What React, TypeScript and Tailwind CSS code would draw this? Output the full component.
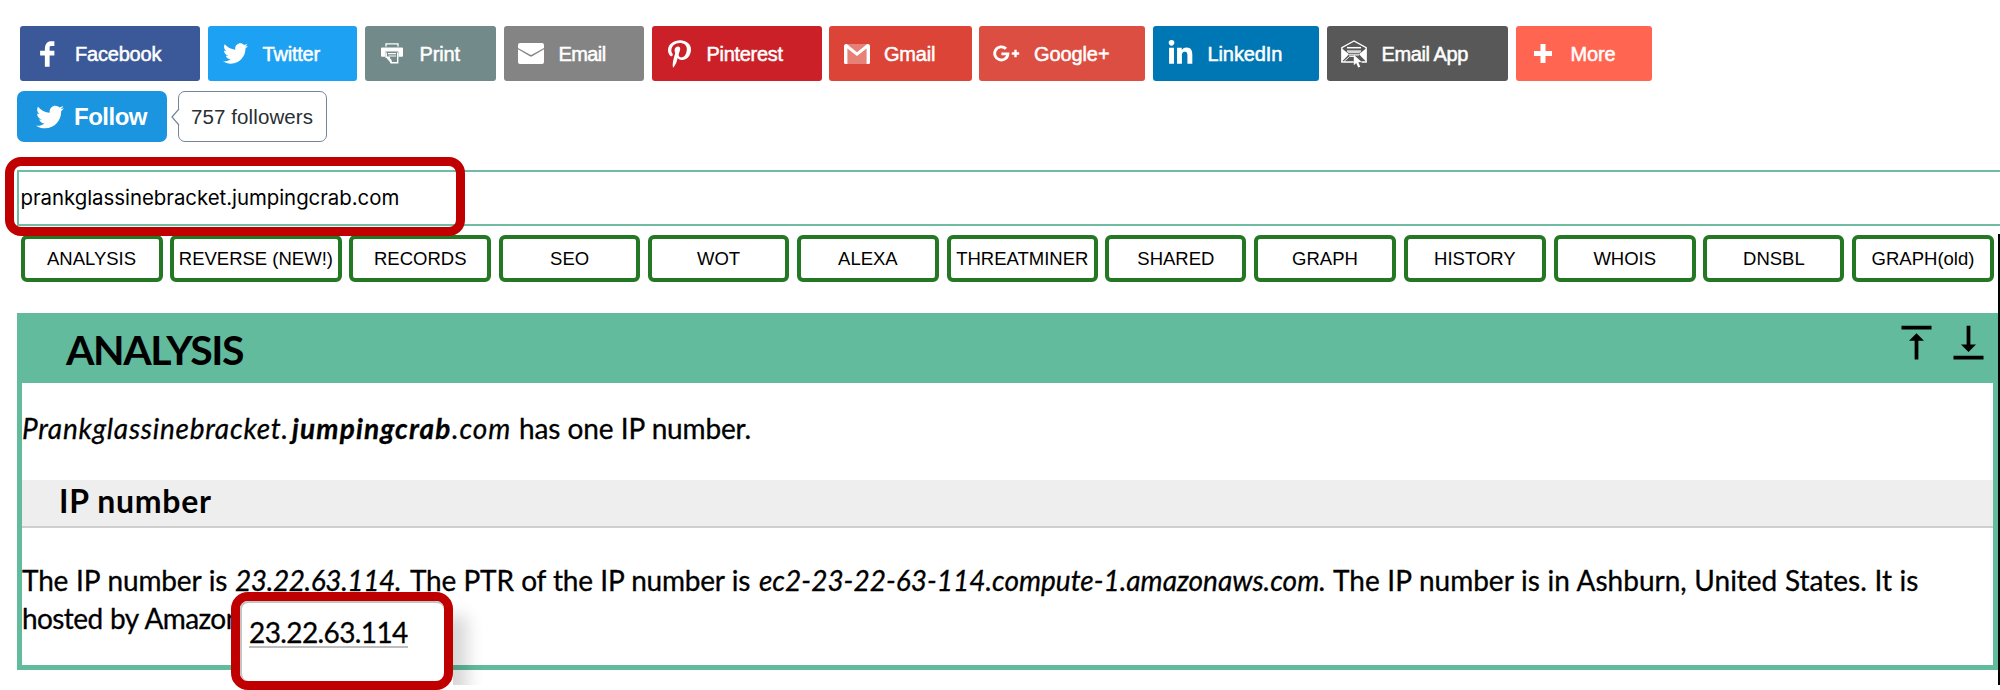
import type { ReactNode } from 'react';
import { FaTwitter, FaPinterestP, FaLinkedinIn } from 'react-icons/fa';
import { MdVerticalAlignTop, MdVerticalAlignBottom } from 'react-icons/md';

const FacebookIcon = () => (
  <svg width="38" height="38" viewBox="0 0 40 40" fill="#fff">
    <path d="M21.700 16.700h5v5h-5v11.600h-5V21.700h-5v-5h5v-2.100c0-2 .6-4.500 1.800-5.900 1.300-1.300 2.800-2 4.700-2h3.500v5h-3.500c-.9 0-1.500.6-1.500 1.500z" />
  </svg>
);

const PrintIcon = () => (
  <svg width="22" height="21" viewBox="0 0 22 21" fill="none" stroke="#fff">
    <path d="M5 3.500V.8h12v2.700" strokeWidth="1.300" />
    <path d="M1.200 4.500h19.600A1.200 1.200 0 0 1 22 5.700V13a.8.8 0 0 1-.8.8h-3.700V8.600h-13v5.200H.8A.8.8 0 0 1 0 13V5.700a1.200 1.200 0 0 1 1.200-1.200z" fill="#fff" stroke="none" />
    <path d="M5.200 9.500v4.700h2.400c1.300 0 1 1.800 1 2.300 1.600 0 1.600 1.400 1.600 3.300h6.500V9.500" strokeWidth="1.400" />
    <path d="M7 10.600h8M7.500 13h7.500" strokeWidth="1.100" />
    <path d="M4.600 14l5.600 6.500v-3.700H8.600V14z" fill="#fff" stroke="none" />
  </svg>
);

const EmailIcon = () => (
  <svg width="26" height="21" viewBox="0 0 26 21" fill="#fff">
    <path d="M2 0h22a2 2 0 0 1 2 2v2.900L14.200 11.600a2.300 2.300 0 0 1-2.400 0L0 4.900V2a2 2 0 0 1 2-2z" />
    <path d="M0 6.200l11.400 6.800a3 3 0 0 0 3.200 0L26 6.200V19a2 2 0 0 1-2 2H2a2 2 0 0 1-2-2z" />
  </svg>
);

const GmailIcon = () => (
  <svg width="26" height="20" viewBox="0 0 26 20">
    <path d="M2 0h22v20H2z" fill="#fff" fillOpacity=".32" />
    <path d="M0 2C0 .7 1 0 2 0h.8L13 8.200 23.200 0H24c1 0 2 .7 2 2v16.500a1.500 1.500 0 0 1-1.500 1.500H22.600V4.600L13 12 3.400 4.600V20H1.500A1.500 1.500 0 0 1 0 18.500z" fill="#fff" />
  </svg>
);

const GooglePlusIcon = () => (
  <svg width="27" height="17" viewBox="0 0 27 17" fill="none" stroke="#fff">
    <path d="M13 3.800A6.600 6.600 0 1 0 14.900 8.900H8.400" strokeWidth="2.900" />
    <path d="M22.500 4.800v7.400M18.800 8.500h7.400" strokeWidth="2.400" />
  </svg>
);

const EmailAppIcon = () => (
  <svg width="26" height="28" viewBox="0 0 26 28" fill="none" stroke="#fff">
    <path d="M.8 22V7.700L13 1l12.200 6.700V22" strokeWidth="1.300" />
    <path d="M.2 22h12.600M20.500 22h5.300" strokeWidth="1.500" />
    <path d="M6 7.700h14" strokeWidth="1.500" />
    <path d="M6 10.200h14v1.700l-2 1.300H8l-2-1.300z" fill="#fff" fillOpacity=".75" stroke="none" />
    <path d="M1 8.500l7 5.800L1 21.500zM25 8.500l-7 5.800 7 7.200z" fill="#fff" stroke="none" />
    <path d="M8 14.900h10" strokeWidth="1.200" />
    <path d="M3 21.500l5.500-5h5" strokeWidth=".9" />
    <path d="M12.800 14.800v10.400l2.400-2.200 2 4.600 2.100-.9-2-4.500 3.400-.1z" fill="#fff" stroke="none" />
  </svg>
);

const PlusIcon = () => (
  <svg width="18" height="19" viewBox="0 0 18 19" fill="#fff">
    <path d="M6.500 0h5v6.900H18v5.200h-6.500V19h-5v-6.900H0V6.900h6.500z" />
  </svg>
);

const shares: { label: string; look: string; icon: ReactNode }[] = [
  { label: 'Facebook', look: 'w-[180px] bg-[#3b5998] tracking-[-0.2px]', icon: <FacebookIcon /> },
  { label: 'Twitter', look: 'w-[149.5px] bg-[#1da1f2] tracking-[-0.2px]', icon: <FaTwitter size={25} /> },
  { label: 'Print', look: 'w-[131.5px] bg-[#728a8a] tracking-[-0.15px]', icon: <PrintIcon /> },
  { label: 'Email', look: 'w-[140.5px] bg-[#848484] tracking-[-0.6px]', icon: <EmailIcon /> },
  { label: 'Pinterest', look: 'w-[170px] bg-[#cb2027] tracking-[-0.3px]', icon: <FaPinterestP className="h-[28px] w-[23px]" preserveAspectRatio="none" /> },
  { label: 'Gmail', look: 'w-[142.5px] bg-[#dc4437] tracking-[-0.2px]', icon: <GmailIcon /> },
  { label: 'Google+', look: 'w-[166px] bg-[#dc4e41] tracking-[-0.1px]', icon: <GooglePlusIcon /> },
  { label: 'LinkedIn', look: 'w-[166.5px] bg-[#0077b5] tracking-[-0.1px]', icon: <FaLinkedinIn size={27} /> },
  { label: 'Email App', look: 'w-[181.5px] bg-[#585858] tracking-[-0.4px]', icon: <EmailAppIcon /> },
  { label: 'More', look: 'w-[136.5px] bg-[#ff6550] tracking-[-0.15px]', icon: <PlusIcon /> },
];

const tabs: { label: string; width: string }[] = [
  { label: 'ANALYSIS', width: 'w-[142px]' },
  { label: 'REVERSE (NEW!)', width: 'w-[171.5px]' },
  { label: 'RECORDS', width: 'w-[142px]' },
  { label: 'SEO', width: 'w-[141.5px]' },
  { label: 'WOT', width: 'w-[141px]' },
  { label: 'ALEXA', width: 'w-[142.5px]' },
  { label: 'THREATMINER', width: 'w-[151px]' },
  { label: 'SHARED', width: 'w-[141px]' },
  { label: 'GRAPH', width: 'w-[142px]' },
  { label: 'HISTORY', width: 'w-[142.5px]' },
  { label: 'WHOIS', width: 'w-[142px]' },
  { label: 'DNSBL', width: 'w-[141px]' },
  { label: 'GRAPH(old)', width: 'w-[142px]' },
];

export default function App() {
  return (
    <div className="relative h-[690px] w-[2000px] overflow-hidden bg-white pt-[26px] font-['Liberation_Sans',Arial,sans-serif] text-black">
      <div className="flex h-[55px] gap-[7.5px] pl-[20px]">
        {shares.map((s) => (
          <button key={s.label} className={`flex shrink-0 items-center rounded-[3px] text-[20px] text-white [-webkit-text-stroke:0.5px_white] ${s.look}`}>
            <span className="flex w-[55px] justify-center [-webkit-text-stroke:0]">{s.icon}</span>
            <span className="pt-px whitespace-nowrap">{s.label}</span>
          </button>
        ))}
      </div>

      <div className="mt-[10px] flex h-[51px] pl-[17px]">
        <button className="flex w-[150px] items-center rounded-[7px] bg-[#1b95e0] pl-[19px] text-[24px] font-bold tracking-[-0.5px] text-white">
          <FaTwitter size={28} />
          <span className="ml-[10px] pt-px">Follow</span>
        </button>
        <div className="relative ml-[11px] flex w-[149px] items-center rounded-[7px] border border-[#74879a] pl-[12px] text-[20.5px] tracking-[0.1px] text-[#292f33]">
          <svg className="absolute top-[16px] left-[-8px]" width="9" height="18" viewBox="0 0 9 18">
            <path d="M9 .5L1 9l8 8.500z" fill="#fff" />
            <path d="M8 .8L1 9l7 8.200" fill="none" stroke="#74879a" strokeWidth="1.300" />
          </svg>
          <span className="pt-px whitespace-nowrap">757 followers</span>
        </div>
      </div>

      <div className="mt-[28px] ml-[17px] flex h-[56px] w-[1990px] items-center border-2 border-[#71bda3] pt-px pl-[1.5px] font-['Inter',sans-serif] text-[20.4px] tracking-[-0.03px]">
        prankglassinebracket.jumpingcrab.com
      </div>

      <div className="mt-[9px] flex h-[47px] gap-[7.625px] pl-[20.5px]">
        {tabs.map((t) => (
          <button key={t.label} className={`flex shrink-0 items-center justify-center rounded-[6px] border-4 border-[#247824] text-[18.5px] whitespace-nowrap ${t.width}`}>
            {t.label}
          </button>
        ))}
      </div>

      <section className="mt-[31px] ml-[17px] h-[357px] w-[1981px] border-5 border-t-0 border-[#62bb9c] font-['Lato',sans-serif] text-[28px]">
        <header className="flex h-[70px] justify-between bg-[#62bb9c] pr-[2px] pl-[44px]">
          <h1 className="pt-px text-[41px] leading-[71px] font-bold tracking-[-1.45px]">ANALYSIS</h1>
          <div className="flex gap-[7px] pt-[7px]">
            <MdVerticalAlignTop size={45} />
            <MdVerticalAlignBottom size={45} />
          </div>
        </header>
        <p className="mt-[26px] flex leading-[38px] whitespace-pre [-webkit-text-stroke:0.3px_black]">
          <i className="w-[270px] tracking-[0.75px]">Prankglassinebracket.</i>
          <b className="w-[160px] tracking-[1.15px] italic">jumpingcrab</b>
          <i className="w-[67px] tracking-[0.9px]">.com</i>
          <span className="tracking-[-0.17px] [word-spacing:0.4px]">has one IP number.</span>
        </p>
        <h2 className="mt-[33px] h-[48px] border-b-2 border-[#cfcfcf] bg-[#eee] pl-[37px] text-[32px] leading-[41px] font-bold tracking-[0.7px]">IP number</h2>
        <div className="mt-[33px] leading-[38px] whitespace-pre [-webkit-text-stroke:0.3px_black]">
          <p className="flex">
            <span className="w-[213px] tracking-[-0.17px] [word-spacing:0.9px]">The IP number is</span>
            <i className="w-[175px] tracking-[-0.38px]">23.22.63.114.</i>
            <span className="w-[349px] tracking-[-0.22px] [word-spacing:0.5px]">The PTR of the IP number is</span>
            <i className="w-[574px]">ec2-23-22-63-114.compute-1.amazonaws.com.</i>
            <span className="[word-spacing:0.5px]">The IP number is in Ashburn, United States. It is</span>
          </p>
          <p className="tracking-[-0.6px] [word-spacing:1px]">hosted by Amazon</p>
        </div>
      </section>

      <div className="absolute top-[234px] right-0 h-[451px] w-[2px] bg-black" />

      <div className="absolute top-[592px] left-[231px] h-[93px] w-[270px] overflow-hidden">
        <div className="mt-[10px] ml-[10px] h-[100px] w-[212px] bg-white shadow-[14px_14px_16px_rgba(0,0,0,0.16)]" />
      </div>
      <div className="absolute top-[592px] left-[231px] h-[98px] w-[222px] rounded-[17px] border-9 border-[#c00000] bg-white font-['Lato',sans-serif] text-[28px]">
        <div className="h-full rounded-[8px] border-t-2 border-l-2 border-[#c4c4c4] pt-[8px] pl-[7px]">
          <span className="inline-block border-b-2 border-[#bdbdbd] leading-[27px] tracking-[-0.61px] [-webkit-text-stroke:0.3px_black]">23.22.63.114</span>
        </div>
      </div>
      <div className="absolute top-[157px] left-[5px] h-[79px] w-[460px] rounded-[16px] border-9 border-[#c00000]" />
    </div>
  );
}
